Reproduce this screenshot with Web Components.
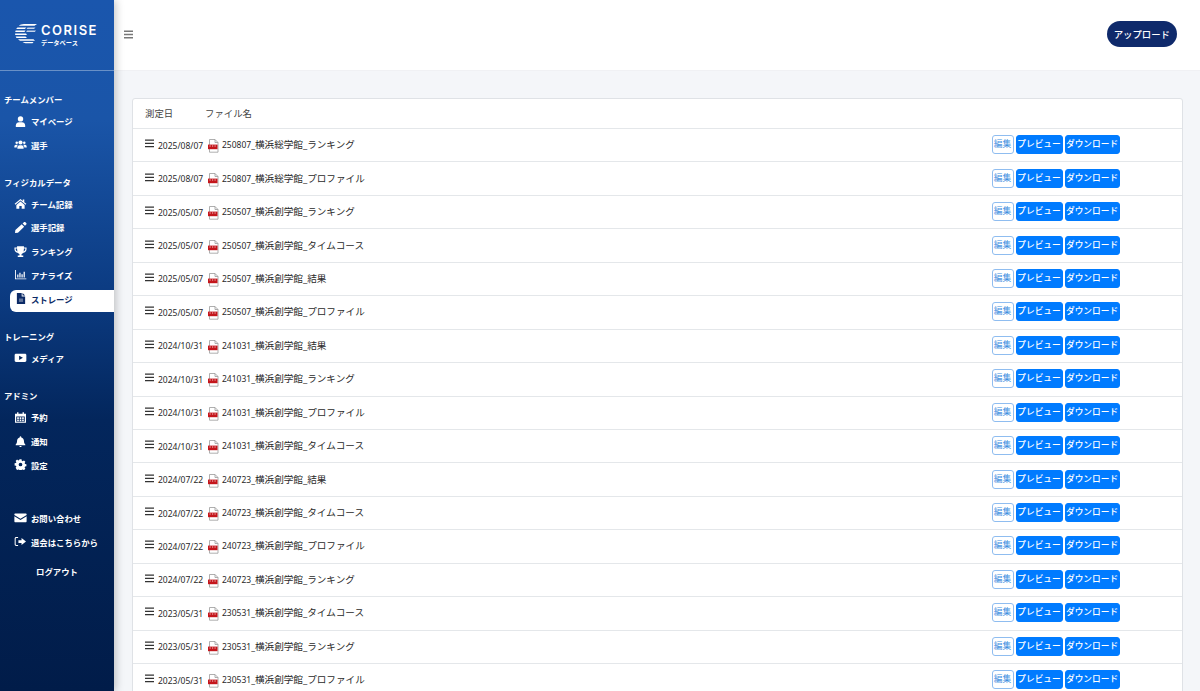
<!DOCTYPE html>
<html lang="ja">
<head>
<meta charset="utf-8">
<title>ストレージ</title>
<style>
  html, body { margin: 0; height: 691px; overflow: hidden; }
  body { font-family: "Noto Sans", "Noto Sans CJK JP", sans-serif; background: #f4f6f9; }
</style>
</head>
<body>
<app-shell>
  <side-bar slot="side"></side-bar>
  <top-bar slot="top"></top-bar>
  <file-table slot="main"></file-table>
</app-shell>

<script>
;(function () {
  "use strict"

  const ICONS = {
    user: '<circle cx="8" cy="4.200" r="3.900"/><path d="M1.200 16v-2.200C1.200 10.700 3.400 9 6 9h4c2.600 0 4.800 1.700 4.800 4.800V16z"/>',
    users: '<circle cx="9" cy="5" r="3"/><circle cx="3.500" cy="5.500" r="1.800"/><circle cx="14.500" cy="5.500" r="1.800"/><path d="M4.500 14v-1.500C4.500 10 6 9 7.500 9h3c1.500 0 3 1 3 3.500V14z"/><path d="M0 11.500C0 9.500 1 8.500 2.500 8.500h1.800c.3 0 .6.1.8.3C4 9.700 3.400 11 3.400 12.500H0zM18 11.500c0-2-1-3-2.500-3h-1.800c-.3 0-.6.1-.8.3 1.100.9 1.700 2.200 1.700 3.700H18z"/>',
    home: '<path d="M9 1.500 .5 8.500l1 1.200L9 3.600l7.500 6.100 1-1.200-3-2.500V2h-2.200v2.200L9 1.500z"/><path d="M9 5 3 10v5.500h4.300v-4h3.400v4H15V10z"/>',
    pen: '<path d="M12 2.200 14 .4c.6-.6 1.500-.6 2.100 0l1.200 1.200c.6.6.6 1.500 0 2.100L15.500 5.600zM10.800 3.400 14.300 6.900 5.300 15.500 1 16l.5-4.200z"/>',
    trophy: '<path d="M4 .5h10v1.500h3.800v2.800c0 2.700-2.300 4.900-5.300 5.200-.6.9-1.300 1.400-2 1.700v2h2.500V16H5v-2.300h2.500v-2c-.7-.3-1.400-.8-2-1.700C2.500 9.700.2 7.500.2 4.800V2H4zM2 3.800v1c0 1.400 1 2.700 2.600 3.200C4.200 6.900 4 5.500 4 3.800zm14 0h-2c0 1.700-.2 3.100-.6 4.200C15 7.500 16 6.200 16 4.800z"/>',
    chart: '<path d="M1 1.500h1.300v12.200H17.500V15H1z"/><path d="M4.200 8h1.800v4.500H4.200zM7.300 5.500h1.800v7H7.300zM10.400 7.500h1.800v5h-1.800zM13.500 4h1.800v8.500h-1.800z"/>',
    file: '<path d="M2 0h7v5h5v11H2z"/><path d="M10.200 0 14 3.800H10.200z"/><path fill="var(--hole,#fff)" d="M5 8h6v5H5z" opacity=".35"/>',
    video: '<path d="M2.500 2.500h13c1.200 0 2 .8 2 2v8c0 1.200-.8 2-2 2h-13c-1.200 0-2-.8-2-2v-8c0-1.200.8-2 2-2z"/><path fill="var(--hole,#03265c)" d="M7 5.500 12.500 8.500 7 11.500z"/>',
    calendar: '<path d="M4 .5h2V2.500h6V.5h2v2h3v13H1v-13h3zM2.800 6.500v7.500h12.400V6.500z"/><path d="M4.200 7.800h2.400v2.400H4.200zM7.800 7.800h2.400v2.400H7.800zM11.400 7.800h2.400v2.400h-2.400zM4.200 11h2.400v2.400H4.200zM7.800 11h2.400v2.400H7.800zM11.400 11h2.400v2.400h-2.400z"/>',
    bell: '<path d="M8 0.500c.7 0 1.200.5 1.200 1.200v.5c2.300.5 3.800 2.400 3.800 4.800 0 3.600 1.200 4.700 2 5.500v1H1v-1c.8-.8 2-1.900 2-5.500 0-2.400 1.500-4.300 3.800-4.800v-.5C6.800 1 7.300.5 8 .5zM6.300 14.500h3.400C9.700 15.400 8.900 16 8 16s-1.700-.6-1.700-1.500z"/>',
    gear: '<path fill-rule="evenodd" d="M6.500.5h3l.4 2 1.300.6 1.800-1.100 2.100 2.100-1.100 1.800.6 1.300 2 .4v3l-2 .4-.6 1.300 1.100 1.800-2.100 2.100-1.800-1.100-1.300.6-.4 2h-3l-.4-2-1.300-.6-1.800 1.100L.9 12.800 2 11l-.6-1.300-2-.4v-3l2-.4L2 4.600.9 2.800 3 .9l1.800 1.100 1.300-.6zM8 5.300a2.700 2.700 0 1 0 0 5.400 2.700 2.700 0 0 0 0-5.400z"/>',
    mail: '<path d="M1.500 2h15c.8 0 1.400.6 1.400 1.400v.8L9 9.800.1 4.200v-.8C.1 2.600.7 2 1.500 2z"/><path d="M.1 6 9 11.600 17.900 6v7.600c0 .8-.6 1.400-1.400 1.400h-15C.7 15 .1 14.400.1 13.600z"/>',
    signout: '<path d="M5.500 3H3C2.200 3 2 3.500 2 4v8c0 .6.2 1 1 1h2.500v1.500H3c-1.600 0-2.500-1-2.500-2.500V4C.5 2.500 1.400 1.500 3 1.500h2.500z"/><path d="M10.500 2.800 17 8l-6.500 5.200V10H6V6h4.500z"/>'
  }

  function icon(name, w, h) {
    const vb = name === "file" || name === "bell" || name === "gear" || name === "user" ? "0 0 16 16" : "0 0 18 16"
    return `<svg width="${w}" height="${h}" viewBox="${vb}" fill="currentColor" aria-hidden="true">${ICONS[name]}</svg>`
  }

  class AppShell extends HTMLElement {
    constructor() {
      super()
      this.attachShadow({ mode: "open" }).innerHTML = `
      <style>
        :host { display: flex; height: 691px; overflow: hidden; }
        .side { flex: 0 0 114px; position: relative; z-index: 2; box-shadow: 2px 0 8px rgba(0,0,0,.22); }
        .body { flex: 1; min-width: 0; display: flex; flex-direction: column; }
        .main { padding: 27px 17.500px 0 18px; }
      </style>
      <div class="side"><slot name="side"></slot></div>
      <div class="body">
        <slot name="top"></slot>
        <div class="main"><slot name="main"></slot></div>
      </div>`
    }
  }
  customElements.define("app-shell", AppShell)

  class NavItem extends HTMLElement {
    constructor() {
      super()
      const active = this.hasAttribute("active")
      const name = this.getAttribute("icon")
      this.attachShadow({ mode: "open" }).innerHTML = `
      <style>
        :host { display: flow-root; height: 23.800px; font-size: 8.400px; font-weight: 700; }
        .row { display: flex; align-items: center; box-sizing: border-box; height: 22px; margin-left: 10px; padding-left: 4px; color: #fff; gap: 4px; }
        /* the pill sits 2px lower than its text */
        .row.active { background: #fff; color: #0b2a66; border-radius: 6px 0 0 6px; --hole: #fff; margin-top: 2px; padding-bottom: 4px; }
        .ic { width: 13px; display: flex; justify-content: center; }
        svg { display: block; }
      </style>
      <div class="row ${active ? "active" : ""}">
        <span class="ic">${icon(name, name === "file" ? 12 : 13, 11)}</span>
        <span><slot></slot></span>
      </div>`
    }
  }
  customElements.define("nav-item", NavItem)

  class NavGroup extends HTMLElement {
    constructor() {
      super()
      this.attachShadow({ mode: "open" }).innerHTML = `
      <style>
        :host { display: block; color: #fff; }
        .title { font-size: 8.400px; font-weight: 700; height: 19px; line-height: 17px; padding-left: 4px; }
      </style>
      <div class="title">${this.getAttribute("label") || ""}</div>
      <slot></slot>`
    }
  }
  customElements.define("nav-group", NavGroup)

  class SideBar extends HTMLElement {
    constructor() {
      super()
      this.attachShadow({ mode: "open" }).innerHTML = `
      <style>
        :host { display: block; height: 691px; color: #fff; background: linear-gradient(180deg, #1a56ad 0, #1a55a8 120px, #0b3a80 300px, #03265c 420px, #011c49 691px); }
        .logo { height: 71px; box-sizing: border-box; padding: 24px 0 0 15px; display: flex; gap: 4px; border-bottom: 1px solid rgba(255,255,255,.35); }
        .name { font: 600 13px/13px "Inter", "Noto Sans", sans-serif; letter-spacing: 1.500px; }
        .sub { font-size: 6.200px; font-weight: 700; line-height: 8px; margin-top: 2px; }
        nav { display: flex; flex-direction: column; padding-top: 20px; }
        nav-group { margin-bottom: 16px; }
        nav-group.gap { margin-bottom: 17px; }
        .foot { margin-top: 13px; }
        .out { font-size: 8.400px; font-weight: 700; text-align: center; margin-top: 11px; line-height: 14px; }
      </style>
      <div class="logo">
        <svg width="22" height="20" viewBox="0 0 22 20" fill="#fff" aria-hidden="true">
          <path d="M6 .6C8 0 10 0 12 0h10l-2.500 1.800H3.800C4.400 1.300 5.200.9 6 .6z"/>
          <path d="M2.500 3.400h9L9.800 5H1.200c.3-.6.800-1.100 1.300-1.600z"/>
          <path d="M.7 6.600h9.800l-1 1.400H.2c.1-.5.300-1 .5-1.400z"/>
          <path d="M.1 9.500h10.900l1 1.400H.2z"/>
          <path d="M.7 12.400h9.800l1.500 1.500H1.500c-.3-.5-.6-1-.8-1.500z"/>
          <path d="M3 15.300h15.500l1.500 1.500H5c-.7-.4-1.400-.9-2-1.500z"/>
          <path d="M7.500 18h11l-1 1.200h-7c-1.100-.2-2.100-.6-3-1.200z"/>
          <path d="M12.500 3.400h8L19 5h-7.500zM12 6.600h9l-1.200 1.400h-8.600z" opacity=".75"/>
        </svg>
        <div>
          <div class="name">CORISE</div>
          <div class="sub">データベース</div>
        </div>
      </div>
      <nav>
        <nav-group label="チームメンバー">
          <nav-item icon="user">マイページ</nav-item>
          <nav-item icon="users">選手</nav-item>
        </nav-group>
        <nav-group label="フィジカルデータ">
          <nav-item icon="home">チーム記録</nav-item>
          <nav-item icon="pen">選手記録</nav-item>
          <nav-item icon="trophy">ランキング</nav-item>
          <nav-item icon="chart">アナライズ</nav-item>
          <nav-item icon="file" active>ストレージ</nav-item>
        </nav-group>
        <nav-group label="トレーニング" class="gap">
          <nav-item icon="video">メディア</nav-item>
        </nav-group>
        <nav-group label="アドミン">
          <nav-item icon="calendar">予約</nav-item>
          <nav-item icon="bell">通知</nav-item>
          <nav-item icon="gear">設定</nav-item>
        </nav-group>
        <div class="foot">
          <nav-item icon="mail">お問い合わせ</nav-item>
          <nav-item icon="signout">退会はこちらから</nav-item>
        </div>
        <div class="out">ログアウト</div>
      </nav>`
    }
  }
  customElements.define("side-bar", SideBar)

  class TopBar extends HTMLElement {
    constructor() {
      super()
      this.attachShadow({ mode: "open" }).innerHTML = `
      <style>
        :host { display: flex; flex: 0 0 71px; height: 71px; box-sizing: border-box; background: #fff; align-items: center; justify-content: space-between; padding: 0 23px 2px 10px; border-bottom: 1px solid #f0f1f4; }
        svg { display: block; }
        button { all: unset; background: #0f2a6b; color: #fff; font-size: 9.400px; font-weight: 500; height: 26px; line-height: 25px; padding: 0 7px; border-radius: 13px; }
      </style>
      <svg width="9" height="9" viewBox="0 0 9 9" fill="#777" aria-hidden="true"><path d="M0 .5h9v1.400H0zM0 3.800h9v1.400H0zM0 7.100h9v1.400H0z"/></svg>
      <button>アップロード</button>`
    }
  }
  customElements.define("top-bar", TopBar)

  class FileRow extends HTMLElement {
    constructor() {
      super()
      this.attachShadow({ mode: "open" })
    }
    connectedCallback() {
      // the digits of a file name are set smaller than its Japanese part
      const name = this.getAttribute("name")
      const cut = name.indexOf("_") + 1
      this.shadowRoot.innerHTML = `
      <style>
        :host { display: flex; align-items: center; height: 33.440px; box-sizing: border-box; border-top: 1px solid #e4e7ea; font-size: 9.600px; color: #2a2a2a; padding-left: 12px; }
        .drag { width: 9px; height: 9px; margin-top: -3px; flex: none; }
        .date { margin-left: 4px; width: 46px; flex: none; font-size: 8.500px; white-space: nowrap; }
        .pdf { margin-left: 4px; flex: none; display: block; margin-top: 2px; }
        .name { margin-left: 3px; flex: 1; white-space: nowrap; margin-top: -2px; }
        .name b { font-weight: 400; font-size: 8.500px; }
        .acts { display: flex; gap: 2px; padding-right: 62px; margin-top: -1px; }
        .btn { box-sizing: border-box; height: 19px; line-height: 16px; border: 1px solid #007bff; border-radius: 3px; background: #007bff; color: #fff; font-size: 8.700px; font-weight: 500; text-align: center; white-space: nowrap; }
        .edit { width: 22px; background: #fff; color: #3f8fe0; border-color: #8fbdf0; font-weight: 400; }
        .prev { width: 47px; }
        .dl { width: 55px; }
      </style>
      <svg class="drag" viewBox="0 0 9 9" fill="#333" aria-hidden="true"><path d="M0 .5h9v1.300H0zM0 3.700h9v1.300H0zM0 6.900h9v1.300H0z"/></svg>
      <span class="date">${this.getAttribute("date")}</span>
      <svg class="pdf" width="11" height="14" viewBox="0 0 11 14" aria-hidden="true">
        <path d="M1.500.5h5.500l3 3v9.700h-8.500z" fill="#fff" stroke="#9a9a9a" stroke-width=".8"/>
        <path d="M7 .5v3h3" fill="none" stroke="#9a9a9a" stroke-width=".8"/>
        <rect x="0" y="5.600" width="9.500" height="4.600" fill="#c4161c"/>
        <path d="M1.500 7h1.200M4 7h1.200M6.500 7h1.200" stroke="#fff" stroke-width=".8"/>
      </svg>
      <span class="name"><b>${name.slice(0, cut)}</b>${name.slice(cut)}</span>
      <div class="acts">
        <span class="btn edit">編集</span>
        <span class="btn prev">プレビュー</span>
        <span class="btn dl">ダウンロード</span>
      </div>`
    }
  }
  customElements.define("file-row", FileRow)

  const FILES = [
    ["2025/08/07", "250807_横浜総学館_ランキング"],
    ["2025/08/07", "250807_横浜総学館_プロファイル"],
    ["2025/05/07", "250507_横浜創学館_ランキング"],
    ["2025/05/07", "250507_横浜創学館_タイムコース"],
    ["2025/05/07", "250507_横浜創学館_結果"],
    ["2025/05/07", "250507_横浜創学館_プロファイル"],
    ["2024/10/31", "241031_横浜創学館_結果"],
    ["2024/10/31", "241031_横浜創学館_ランキング"],
    ["2024/10/31", "241031_横浜創学館_プロファイル"],
    ["2024/10/31", "241031_横浜創学館_タイムコース"],
    ["2024/07/22", "240723_横浜創学館_結果"],
    ["2024/07/22", "240723_横浜創学館_タイムコース"],
    ["2024/07/22", "240723_横浜創学館_プロファイル"],
    ["2024/07/22", "240723_横浜創学館_ランキング"],
    ["2023/05/31", "230531_横浜創学館_タイムコース"],
    ["2023/05/31", "230531_横浜創学館_ランキング"],
    ["2023/05/31", "230531_横浜創学館_プロファイル"]
  ]

  class FileTable extends HTMLElement {
    constructor() {
      super()
      this.attachShadow({ mode: "open" }).innerHTML = `
      <style>
        :host { display: block; background: #fff; border: 1px solid #dfe2e6; border-radius: 3px; }
        .head { display: flex; align-items: center; height: 29px; box-sizing: border-box; padding: 0 0 2px 12px; font-size: 9.400px; color: #444; }
        .head span:first-child { width: 60px; }
      </style>
      <div class="head"><span>測定日</span><span>ファイル名</span></div>
      <div id="rows"></div>`
      const rows = this.shadowRoot.getElementById("rows")
      for (const [date, name] of FILES) {
        const row = document.createElement("file-row")
        row.setAttribute("date", date)
        row.setAttribute("name", name)
        rows.appendChild(row)
      }
    }
  }
  customElements.define("file-table", FileTable)
})()
</script>
</body>
</html>
